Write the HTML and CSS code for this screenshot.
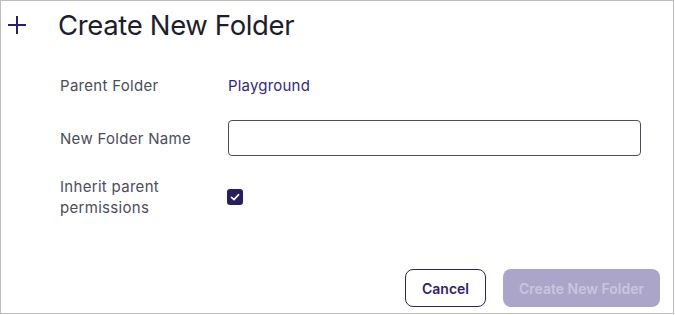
FILE: index.html
```html
<!DOCTYPE html>
<html lang="en">
<head>
  <meta charset="UTF-8">
  <meta name="viewport" content="width=device-width, initial-scale=1.0">
  <title>Create New Folder</title>
  <link rel="stylesheet" href="styles.css">
</head>
<body>
  <div class="dialog">
    <div class="header">
      <svg class="plus" width="18" height="18" viewBox="0 0 18 18">
        <path d="M9 0 V18 M0 9 H18" stroke="#2a1f6b" stroke-width="2" fill="none"/>
      </svg>
      <h2>Create New Folder</h2>
    </div>

    <form class="form">
      <div class="row">
        <div class="label">Parent Folder</div>
        <div class="value parent">Playground</div>
      </div>
      <div class="row name-row">
        <label class="label" for="name">New Folder Name</label>
        <input class="input" id="name" type="text">
      </div>
      <div class="row inherit-row">
        <div class="label">Inherit parent<br>permissions</div>
        <span class="check">
          <svg width="16" height="16" viewBox="0 0 16 16">
            <path d="M4.5 8.3 L7 10.6 L11.6 5.6" stroke="#fff" stroke-width="1.6" fill="none" stroke-linecap="round" stroke-linejoin="round"/>
          </svg>
        </span>
      </div>
    </form>

    <div class="actions">
      <button type="button" class="btn cancel">Cancel</button>
      <button type="button" class="btn create" disabled>Create New Folder</button>
    </div>
  </div>
</body>
</html>
```

FILE: styles.css
```css
body {
  margin: 0;
  font-family: Inter, "Noto Sans", sans-serif;
  background: #fff;
}
.dialog {
  width: 674px;
  height: 314px;
  box-sizing: border-box;
  border: 1px solid #bdbdbd;
  display: flex;
  flex-direction: column;
}
.header {
  display: flex;
  align-items: center;
  height: 48px;
}
.plus {
  margin-left: 7px;
  margin-top: -1px;
}
.header h2 {
  margin: 0 0 0 32px;
  font-size: 27.5px;
  font-weight: 400;
  color: #1e1d2c;
  letter-spacing: -0.35px;
}
.form {
  margin-top: 26px;
  padding-left: 59px;
}
.row {
  display: flex;
  align-items: center;
}
.label {
  width: 168px;
  font-size: 15px;
  line-height: 21px;
  letter-spacing: 0.3px;
  color: #4b4d5b;
}
.parent {
  font-size: 15px;
  line-height: 21px;
  letter-spacing: 0.2px;
  color: #33297a;
}
.name-row {
  margin-top: 24px;
}
.inherit-row {
  margin-top: 20px;
}
.input {
  width: 413px;
  height: 36px;
  box-sizing: border-box;
  border: 1px solid #4a4c64;
  border-radius: 4px;
  padding: 0 10px;
  font-size: 15px;
}
.check {
  display: block;
  width: 16px;
  height: 16px;
  border-radius: 3px;
  background: #2a1f5e;
  margin-left: -1px;
}
.check svg {
  display: block;
}
.actions {
  margin-top: auto;
  margin-bottom: 6px;
  display: flex;
  justify-content: flex-end;
  gap: 17px;
  padding-right: 13px;
}
.btn {
  height: 38px;
  border-radius: 8px;
  font-family: Inter, "Noto Sans", sans-serif;
  font-size: 14px;
  font-weight: 600;
}
.cancel {
  width: 81px;
  background: #fff;
  border: 1px solid #2e2466;
  color: #2e2466;
}
.create {
  width: 157px;
  background: #aba6c9;
  border: none;
  color: #c9c5de;
}
```
